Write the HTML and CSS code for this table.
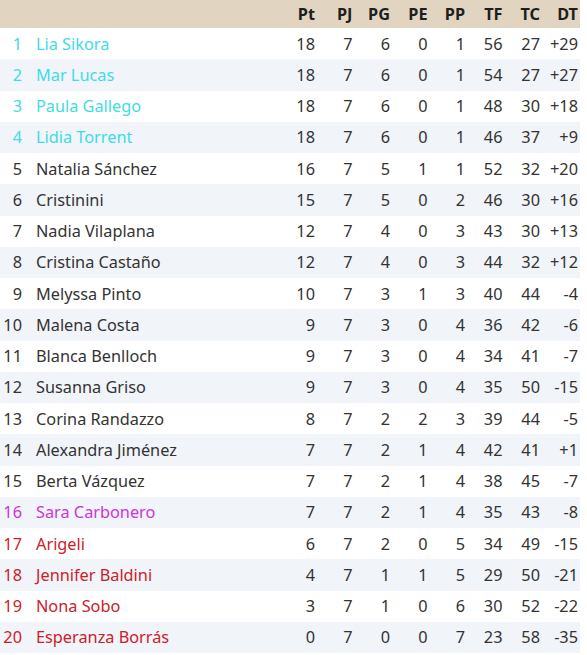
FILE: index.html
```html
<!DOCTYPE html>
<html lang="es">
<head>
<meta charset="utf-8">
<title>Clasificación</title>
<link rel="stylesheet" href="styles.css">
</head>
<body>
<table class="standings">
  <colgroup>
    <col class="c-rank"><col class="c-name"><col class="c-num"><col class="c-num"><col class="c-num"><col class="c-num"><col class="c-num"><col class="c-num"><col class="c-num"><col class="c-last">
  </colgroup>
  <thead>
    <tr><th></th><th></th><th>Pt</th><th>PJ</th><th>PG</th><th>PE</th><th>PP</th><th>TF</th><th>TC</th><th>DT</th></tr>
  </thead>
  <tbody>
    <tr class="up"><td>1</td><td class="name">Lia Sikora</td><td>18</td><td>7</td><td>6</td><td>0</td><td>1</td><td>56</td><td>27</td><td>+29</td></tr>
    <tr class="up"><td>2</td><td class="name">Mar Lucas</td><td>18</td><td>7</td><td>6</td><td>0</td><td>1</td><td>54</td><td>27</td><td>+27</td></tr>
    <tr class="up"><td>3</td><td class="name">Paula Gallego</td><td>18</td><td>7</td><td>6</td><td>0</td><td>1</td><td>48</td><td>30</td><td>+18</td></tr>
    <tr class="up"><td>4</td><td class="name">Lidia Torrent</td><td>18</td><td>7</td><td>6</td><td>0</td><td>1</td><td>46</td><td>37</td><td>+9</td></tr>
    <tr><td>5</td><td class="name">Natalia Sánchez</td><td>16</td><td>7</td><td>5</td><td>1</td><td>1</td><td>52</td><td>32</td><td>+20</td></tr>
    <tr><td>6</td><td class="name">Cristinini</td><td>15</td><td>7</td><td>5</td><td>0</td><td>2</td><td>46</td><td>30</td><td>+16</td></tr>
    <tr><td>7</td><td class="name">Nadia Vilaplana</td><td>12</td><td>7</td><td>4</td><td>0</td><td>3</td><td>43</td><td>30</td><td>+13</td></tr>
    <tr><td>8</td><td class="name">Cristina Castaño</td><td>12</td><td>7</td><td>4</td><td>0</td><td>3</td><td>44</td><td>32</td><td>+12</td></tr>
    <tr><td>9</td><td class="name">Melyssa Pinto</td><td>10</td><td>7</td><td>3</td><td>1</td><td>3</td><td>40</td><td>44</td><td>-4</td></tr>
    <tr><td>10</td><td class="name">Malena Costa</td><td>9</td><td>7</td><td>3</td><td>0</td><td>4</td><td>36</td><td>42</td><td>-6</td></tr>
    <tr><td>11</td><td class="name">Blanca Benlloch</td><td>9</td><td>7</td><td>3</td><td>0</td><td>4</td><td>34</td><td>41</td><td>-7</td></tr>
    <tr><td>12</td><td class="name">Susanna Griso</td><td>9</td><td>7</td><td>3</td><td>0</td><td>4</td><td>35</td><td>50</td><td>-15</td></tr>
    <tr><td>13</td><td class="name">Corina Randazzo</td><td>8</td><td>7</td><td>2</td><td>2</td><td>3</td><td>39</td><td>44</td><td>-5</td></tr>
    <tr><td>14</td><td class="name">Alexandra Jiménez</td><td>7</td><td>7</td><td>2</td><td>1</td><td>4</td><td>42</td><td>41</td><td>+1</td></tr>
    <tr><td>15</td><td class="name">Berta Vázquez</td><td>7</td><td>7</td><td>2</td><td>1</td><td>4</td><td>38</td><td>45</td><td>-7</td></tr>
    <tr class="mid"><td>16</td><td class="name">Sara Carbonero</td><td>7</td><td>7</td><td>2</td><td>1</td><td>4</td><td>35</td><td>43</td><td>-8</td></tr>
    <tr class="down"><td>17</td><td class="name">Arigeli</td><td>6</td><td>7</td><td>2</td><td>0</td><td>5</td><td>34</td><td>49</td><td>-15</td></tr>
    <tr class="down"><td>18</td><td class="name">Jennifer Baldini</td><td>4</td><td>7</td><td>1</td><td>1</td><td>5</td><td>29</td><td>50</td><td>-21</td></tr>
    <tr class="down"><td>19</td><td class="name">Nona Sobo</td><td>3</td><td>7</td><td>1</td><td>0</td><td>6</td><td>30</td><td>52</td><td>-22</td></tr>
    <tr class="down"><td>20</td><td class="name">Esperanza Borrás</td><td>0</td><td>7</td><td>0</td><td>0</td><td>7</td><td>23</td><td>58</td><td>-35</td></tr>
  </tbody>
</table>
</body>
</html>
```
FILE: styles.css
```css
html, body {
  margin: 0;
  padding: 0;
  background: #ffffff;
}
body {
  font-family: "Noto Sans", "Open Sans", sans-serif;
  font-size: 16.3px;
  color: #333333;
}
.standings {
  border-collapse: collapse;
  table-layout: fixed;
  width: 580px;
}
.c-rank { width: 22px; }
.c-name { width: 255.5px; }
.c-num { width: 37.5px; }
.c-last { width: 40px; }
.standings th,
.standings td {
  padding: 0;
  text-align: right;
  white-space: nowrap;
  overflow: hidden;
}
.standings thead tr {
  background: #e1d4c0;
  height: 28px;
}
.standings th {
  font-weight: 700;
  color: #1e1e1e;
  line-height: 28px;
}
.standings tbody tr {
  height: 31.25px;
}
.standings tbody tr:nth-child(even) {
  background: #f1f4f9;
}
.standings td:last-child,
.standings th:last-child {
  padding-right: 2px;
}
.standings td.name {
  text-align: left;
  padding-left: 14px;
}
.standings tr.up td { color: #3fdbe6; }
.standings tr.mid td:nth-child(-n+2) { color: #c936d8; }
.standings tr.down td:nth-child(-n+2) { color: #cc2029; }
.standings tr.up td:nth-child(n+3) { color: #333333; }
```
